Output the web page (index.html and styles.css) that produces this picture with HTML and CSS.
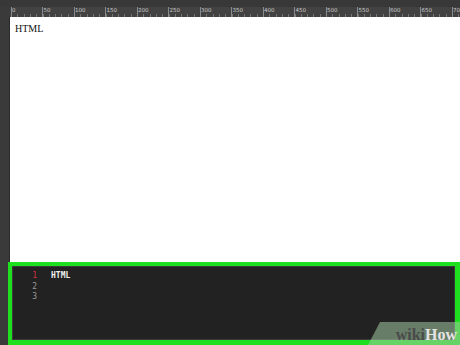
FILE: index.html
```html
<!DOCTYPE html>
<html>
<head>
<meta charset="utf-8">
<link rel="stylesheet" href="styles.css">
</head>
<body>
<div class="app">
  <div class="topbar"></div>
  <div class="ruler">
    <div class="labels">
      <span>0</span><span>50</span><span>100</span><span>150</span><span>200</span><span>250</span><span>300</span><span>350</span><span>400</span><span>450</span><span>500</span><span>550</span><span>600</span><span>650</span><span>700</span>
    </div>
  </div>
  <div class="middle">
    <div class="side"></div>
    <div class="canvas"><p class="doc">HTML</p></div>
  </div>
  <div class="editor">
    <div class="inner">
      <div class="gutter">
        <span class="active">1</span><span>2</span><span>3</span>
      </div>
      <div class="code"><span>HTML</span></div>
    </div>
    <div class="watermark"><span class="wiki">wiki</span><span class="how">How</span></div>
  </div>
</div>
</body>
</html>
```
FILE: styles.css
```css
* { box-sizing: border-box; }
html, body { margin: 0; padding: 0; }
body { width: 460px; height: 345px; overflow: hidden; background: #3a3a3a; }
.app { width: 460px; height: 345px; display: flex; flex-direction: column; }
.topbar { height: 7px; background: #383838; }
.ruler {
  height: 10px;
  margin-left: 10px;
  overflow: hidden;
  background-color: #424242;
  background-image:
    repeating-linear-gradient(to right, #8a8a8a 0 1px, transparent 1px 31.5px),
    repeating-linear-gradient(to right, #777 0 1px, transparent 1px 6.3px);
  background-size: 100% 10px, 100% 3px;
  background-position: 1px 0, 1px 7px;
  background-repeat: no-repeat;
}
.labels { display: flex; padding-left: 2px; }
.labels span {
  width: 31.5px; flex: none;
  font-family: "DejaVu Sans", sans-serif;
  font-size: 5.5px; line-height: 7px; color: #c8c8c8;
}
.middle { display: flex; height: 245px; }
.side { width: 10px; background: #3a3a3a; border-right: 1px solid #2a2a2a; }
.canvas { flex: 1; background: #fff; padding: 6px 5px; }
.doc {
  margin: 0; font-family: "Liberation Serif", serif; font-size: 10px; color: #111;
}
.editor {
  flex: 1;
  margin-left: 8px;
  border: 4px solid #1ee01e;
  border-right-width: 5px;
  border-bottom-width: 5px;
  position: relative;
  background: #1ee01e;
}
.inner {
  height: 100%;
  background: #222;
  border: 1px solid #3a3a3a;
  display: flex;
  padding: 4px 0 0 0;
}
.gutter {
  width: 24px;
  display: flex; flex-direction: column; align-items: flex-end;
  font-family: "DejaVu Sans Mono", monospace; font-size: 8px; line-height: 10.5px;
  color: #9a9a9a;
}
.gutter .active { color: #d03040; }
.code {
  padding-left: 14px;
  font-family: "DejaVu Sans Mono", monospace; font-size: 8px; line-height: 10.5px;
  font-weight: bold; color: #eee;
}
.watermark {
  position: absolute; right: -5px; bottom: -5px;
  width: 92px; height: 23px;
  background: rgba(160, 200, 160, 0.55);
  clip-path: polygon(12px 0, 100% 0, 100% 100%, 0 100%);
  display: flex; align-items: center; justify-content: flex-end;
  padding-right: 3px; padding-top: 2px;
  font-family: "Liberation Serif", serif; font-size: 16px; font-weight: bold;
}
.wiki { color: #4a4a4a; }
.how { color: #e4e4e4; }
```
